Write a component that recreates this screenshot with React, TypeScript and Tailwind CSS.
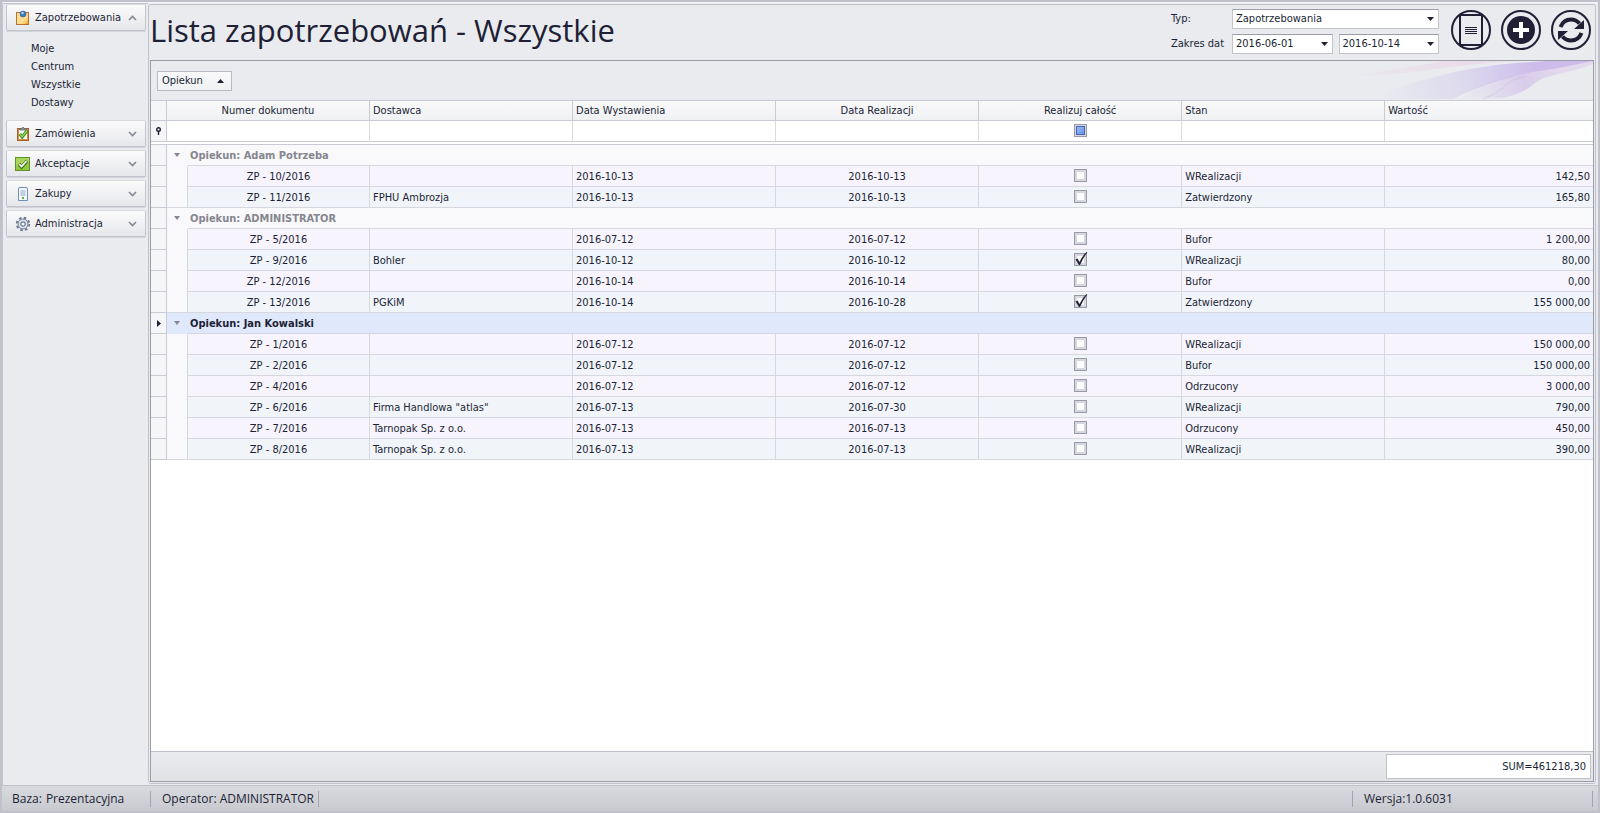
import type { ReactNode } from "react";

type Row = {
  no: string;
  supplier?: string;
  issued: string;
  due: string;
  whole?: boolean;
  state: string;
  value: string;
};

type Group = { owner: string; active?: boolean; rows: Row[] };

const groups: Group[] = [
  {
    owner: "Adam Potrzeba",
    rows: [
      { no: "ZP - 10/2016", issued: "2016-10-13", due: "2016-10-13", state: "WRealizacji", value: "142,50" },
      { no: "ZP - 11/2016", supplier: "FPHU Ambrozja", issued: "2016-10-13", due: "2016-10-13", state: "Zatwierdzony", value: "165,80" },
    ],
  },
  {
    owner: "ADMINISTRATOR",
    rows: [
      { no: "ZP - 5/2016", issued: "2016-07-12", due: "2016-07-12", state: "Bufor", value: "1 200,00" },
      { no: "ZP - 9/2016", supplier: "Bohler", issued: "2016-10-12", due: "2016-10-12", whole: true, state: "WRealizacji", value: "80,00" },
      { no: "ZP - 12/2016", issued: "2016-10-14", due: "2016-10-14", state: "Bufor", value: "0,00" },
      { no: "ZP - 13/2016", supplier: "PGKiM", issued: "2016-10-14", due: "2016-10-28", whole: true, state: "Zatwierdzony", value: "155 000,00" },
    ],
  },
  {
    owner: "Jan Kowalski",
    active: true,
    rows: [
      { no: "ZP - 1/2016", issued: "2016-07-12", due: "2016-07-12", state: "WRealizacji", value: "150 000,00" },
      { no: "ZP - 2/2016", issued: "2016-07-12", due: "2016-07-12", state: "Bufor", value: "150 000,00" },
      { no: "ZP - 4/2016", issued: "2016-07-12", due: "2016-07-12", state: "Odrzucony", value: "3 000,00" },
      { no: "ZP - 6/2016", supplier: 'Firma Handlowa "atlas"', issued: "2016-07-13", due: "2016-07-30", state: "WRealizacji", value: "790,00" },
      { no: "ZP - 7/2016", supplier: "Tarnopak Sp. z o.o.", issued: "2016-07-13", due: "2016-07-13", state: "Odrzucony", value: "450,00" },
      { no: "ZP - 8/2016", supplier: "Tarnopak Sp. z o.o.", issued: "2016-07-13", due: "2016-07-13", state: "WRealizacji", value: "390,00" },
    ],
  },
];

function NoteIcon() {
  return (
    <svg width="16" height="16" viewBox="0 0 16 16">
      <rect x="1.5" y="2.5" width="12" height="12" fill="#fbd069" stroke="#b5713a" />
      <path d="M2 3h11v5L6 14H2z" fill="#fde3a0" opacity=".7" />
      <path d="M9.5 14l3.500-3.500V14z" fill="#f3ab44" />
      <circle cx="8" cy="4" r="3" fill="#3f78bd" stroke="#2c5a96" strokeWidth=".6" />
      <circle cx="7.500" cy="3" r="1.300" fill="#a9cdf2" />
    </svg>
  );
}

function ClipboardIcon() {
  return (
    <svg width="16" height="16" viewBox="0 0 16 16">
      <rect x="2.500" y="2.500" width="11" height="12" fill="#d98b45" stroke="#a85f25" />
      <rect x="4" y="4" width="8" height="9" fill="#f4f6f8" />
      <path d="M5 4V2.500h1.500Q8 0 9.500 2.500H11V4z" fill="#8b959c" stroke="#5b656c" strokeWidth=".7" />
      <path d="M4.800 8l2.400 3 5-6.500" fill="none" stroke="#3c8d1f" strokeWidth="3" />
      <path d="M5 8.200l2.200 2.500 4.800-6" fill="none" stroke="#8fd84e" strokeWidth="1.400" />
    </svg>
  );
}

function AcceptIcon() {
  return (
    <svg width="16" height="16" viewBox="0 0 16 16">
      <rect x=".5" y="1.500" width="14" height="13" fill="#92c83e" stroke="#5d9425" />
      <path d="M1 2h13v5L1 10z" fill="#b4dc68" opacity=".7" />
      <path d="M4 8l2.500 3 5.500-6" fill="none" stroke="#3f6d1c" strokeWidth="3.400" />
      <path d="M4.300 8.200l2.200 2.400 5-5.400" fill="none" stroke="#fff" strokeWidth="1.700" />
    </svg>
  );
}

function ReceiptIcon() {
  return (
    <svg width="16" height="16" viewBox="0 0 16 16">
      <path d="M3.500 3q0-1.500 1.500-1.500h6q1.500 0 1.500 1.500v11.500h-9z" fill="#f3f7fc" stroke="#6f8fb8" />
      <path d="M5.500 5h5M5.500 7h5M5.500 9h5" stroke="#8da9cc" />
      <rect x="7" y="11" width="2" height="2" fill="#5fb336" />
    </svg>
  );
}

function GearIcon() {
  return (
    <svg width="16" height="16" viewBox="0 0 16 16">
      <circle cx="8" cy="8" r="6.300" fill="none" stroke="#6c7a91" strokeWidth="1.800" strokeDasharray="2.600 2.350" />
      <circle cx="8" cy="8" r="5" fill="#dfe5ee" stroke="#6c7a91" />
      <circle cx="8" cy="8" r="2.200" fill="#fff" stroke="#6c7a91" strokeWidth="1.200" />
    </svg>
  );
}

function Chevron({ up }: { up?: boolean }) {
  return (
    <svg width="9" height="6" viewBox="0 0 9 6" className="ml-auto">
      <path d={up ? "M1 5l3.500-3.500L8 5" : "M1 1l3.500 3.500L8 1"} fill="none" stroke="#878895" strokeWidth="1.600" />
    </svg>
  );
}

function NavButton({ icon, label, open }: { icon: ReactNode; label: string; open?: boolean }) {
  return (
    <button className="flex h-[27px] w-full items-center gap-1 rounded-xs border border-[#c3c4cd] border-t-[#d8d9df] bg-linear-to-b from-[#fbfbfc] to-[#e6e7eb] pr-2 pl-2 shadow-[0_1px_0_#d2d3da]">
      {icon}
      <span>{label}</span>
      <Chevron up={open} />
    </button>
  );
}

function Combo({ id, label, value }: { id: string; label: string; value: string }) {
  return (
    <div className="relative flex-1">
      <select
        id={id}
        aria-label={label}
        className="block h-5 w-full appearance-none border border-[#c3c4cc] border-t-[#9b9ca8] bg-white pl-[3px] outline-none"
      >
        <option>{value}</option>
      </select>
      <svg width="7" height="4" viewBox="0 0 7 4" className="pointer-events-none absolute top-2 right-[5px]">
        <path d="M0 0h7L3.500 4z" fill="#201f35" />
      </svg>
    </div>
  );
}

function Check({ checked, label }: { checked?: boolean; label: string }) {
  return (
    <span className="relative block size-[13px]">
      <input
        type="checkbox"
        aria-label={label}
        defaultChecked={checked}
        className="block size-[13px] appearance-none border border-[#999aa7] bg-white shadow-[inset_0_0_0_2px_#d5d6de]"
      />
      {checked && (
        <svg width="14" height="15" viewBox="0 0 14 15" className="pointer-events-none absolute -top-px left-0">
          <path d="M1.500 7.500l2-1 2 3.500Q8.500 3.500 12.500 0l.8.4Q9 6 6 13H5z" fill="#24233a" />
        </svg>
      )}
    </span>
  );
}

function Swoosh() {
  return (
    <svg viewBox="0 0 250 39" width="250" height="39" className="absolute top-0 right-0">
      <defs>
        <linearGradient id="violet" x1="20" y1="38" x2="190" y2="0" gradientUnits="userSpaceOnUse">
          <stop offset=".1" stopColor="#c9bdec" stopOpacity="0" />
          <stop offset=".55" stopColor="#c9bdec" stopOpacity=".35" />
          <stop offset="1" stopColor="#c4b0ea" stopOpacity=".8" />
        </linearGradient>
        <linearGradient id="plum" x1="120" y1="38" x2="220" y2="4" gradientUnits="userSpaceOnUse">
          <stop offset="0" stopColor="#d3bfe9" stopOpacity="0" />
          <stop offset=".6" stopColor="#cdb8e8" stopOpacity=".6" />
          <stop offset="1" stopColor="#dcc9ea" stopOpacity=".5" />
        </linearGradient>
        <linearGradient id="pink" x1="0" x2="1">
          <stop offset="0" stopColor="#ecd0e4" stopOpacity="0" />
          <stop offset=".7" stopColor="#ecd0e4" stopOpacity=".6" />
          <stop offset="1" stopColor="#ecd0e4" stopOpacity=".1" />
        </linearGradient>
      </defs>
      <path d="M0 15Q60 8 100 0h80Q120 3 80 10Q40 15 0 15z" fill="url(#pink)" />
      <path d="M20 38Q90 14 127 8Q160 2 205 0h45Q215 8 190 11Q140 22 110 38z" fill="url(#violet)" />
      <path d="M110 38Q140 20 180 13Q215 6 250 0v3Q232 10 215 13Q200 16 192 22Q180 33 160 37z" fill="url(#plum)" />
      <path d="M140 38Q155 32 163 24Q168 18 184 15" fill="none" stroke="#b9a6e2" strokeOpacity=".3" />
    </svg>
  );
}

function StatusItem({ children, className = "" }: { children?: ReactNode; className?: string }) {
  return <div className={"flex h-4 items-center border-r border-[#a3a4ae] " + className}>{children}</div>;
}

const headCell = "border-r border-b border-[#c9cad3] bg-linear-to-b from-[#f9f9fa] to-[#f0f1f3] px-[3px] font-normal last:border-r-0";
const filterCell = "border-r border-b border-[#c9cad3] border-r-[#dadbe1] bg-white last:border-r-0";
const cell = "truncate border-r border-b border-[#d6d7df] px-[3px] pt-[2px] last:border-r-0";
const gutter = "border-r border-b border-[#c9cad3] bg-[#f5f6f8]";

export default function App() {
  return (
    <div className="flex min-h-screen flex-col border-2 border-[#c0c1cb] bg-[#e9ebef] font-['DejaVu_Sans_Condensed','DejaVu_Sans',sans-serif] text-[11px] leading-[14px] text-[#201f35]">
      <div className="flex flex-1 border-t border-[#f3f4f6]">
        <nav className="flex w-[146px] shrink-0 flex-col gap-[3px] border-t border-l border-[#c3c4cd] pr-[2px] pl-[3px]">
          <NavButton icon={<NoteIcon />} label="Zapotrzebowania" open />
          <ul className="mb-[5px] pt-[6px] pl-[25px] leading-[18px]">
            {["Moje", "Centrum", "Wszystkie", "Dostawy"].map((item) => (
              <li key={item}>
                <a href="#">{item}</a>
              </li>
            ))}
          </ul>
          <NavButton icon={<ClipboardIcon />} label="Zamówienia" />
          <NavButton icon={<AcceptIcon />} label="Akceptacje" />
          <NavButton icon={<ReceiptIcon />} label="Zakupy" />
          <NavButton icon={<GearIcon />} label="Administracja" />
        </nav>

        <main className="mt-px mr-[2px] mb-px flex min-w-0 flex-1 flex-col rounded-[3px] border border-[#c0c1cb] px-px pb-px">
          <header className="flex h-[55px] items-center gap-3 pb-[5px]">
            <h1 className="flex-1 font-['Open_Sans',sans-serif] text-[31px] leading-[42px]">
              Lista zapotrzebowań - Wszystkie
            </h1>
            <div className="flex w-[268px] flex-col gap-[5px] pt-[3px]">
              <div className="flex items-center">
                <label htmlFor="typ" className="w-[61px]">Typ:</label>
                <Combo id="typ" label="Typ" value="Zapotrzebowania" />
              </div>
              <div className="flex items-center">
                <label htmlFor="od" className="w-[61px]">Zakres dat</label>
                <div className="flex flex-1 gap-[6px]">
                  <Combo id="od" label="Data od" value="2016-06-01" />
                  <Combo id="do" label="Data do" value="2016-10-14" />
                </div>
              </div>
            </div>
            <div className="flex gap-[10px] pr-[3px]">
              <button aria-label="Dokument">
                <svg width="40" height="40" viewBox="0 0 40 40" fill="none" stroke="#201f35">
                  <circle cx="20" cy="20" r="19" strokeWidth="2" />
                  <path d="M9 5h22v30H9z" strokeWidth="2" />
                  <path d="M14 17.500h12M14 19.500h12M14 21.500h12M14 23.500h12" />
                </svg>
              </button>
              <button aria-label="Dodaj">
                <svg width="40" height="40" viewBox="0 0 40 40">
                  <circle cx="20" cy="20" r="19" fill="none" stroke="#201f35" strokeWidth="2" />
                  <circle cx="20" cy="20" r="14" fill="#201f35" />
                  <path d="M20 12v16M12 20h16" stroke="#fff" strokeWidth="4" />
                </svg>
              </button>
              <button aria-label="Odśwież">
                <svg width="40" height="40" viewBox="0 0 40 40">
                  <circle cx="20" cy="20" r="19" fill="none" stroke="#201f35" strokeWidth="2" />
                  <path d="M9.500 17q3-7.500 10.500-7.500 5 0 8.500 4" fill="none" stroke="#201f35" strokeWidth="4" />
                  <path d="M33 10v9H23z" fill="#201f35" />
                  <path d="M30.500 23q-3 7.500-10.500 7.500-5 0-8.500-4" fill="none" stroke="#201f35" strokeWidth="4" />
                  <path d="M7 30v-9h10z" fill="#201f35" />
                </svg>
              </button>
            </div>
          </header>

          <section className="flex flex-1 flex-col border border-[#9b9ca8] bg-white">
            <div className="relative flex h-10 items-center border-b border-[#c9cad3] bg-[#e9ebef] px-[6px]">
              <Swoosh />
              <button className="flex h-5 w-[75px] items-center justify-between border border-[#b9bac4] bg-linear-to-b from-[#f9f9fa] to-[#f0f1f3] pr-[7px] pl-1">
                Opiekun
                <svg width="7" height="4" viewBox="0 0 7 4">
                  <path d="M0 4h7L3.500 0z" fill="#201f35" />
                </svg>
              </button>
            </div>

            <table className="w-full table-fixed border-separate border-spacing-0">
              <colgroup>
                <col className="w-4" />
                <col className="w-[21px]" />
                <col className="w-[182px]" />
                <col className="w-[14.08%]" />
                <col className="w-[14.08%]" />
                <col className="w-[14.08%]" />
                <col className="w-[14.08%]" />
                <col className="w-[14.08%]" />
                <col />
              </colgroup>
              <thead>
                <tr className="h-5">
                  <td className={gutter} />
                  <th colSpan={2} className={headCell}>Numer dokumentu</th>
                  <th className={headCell + " text-left"}>Dostawca</th>
                  <th className={headCell + " text-left"}>Data Wystawienia</th>
                  <th className={headCell}>Data Realizacji</th>
                  <th className={headCell}>Realizuj całość</th>
                  <th className={headCell + " text-left"}>Stan</th>
                  <th className={headCell + " text-left"}>Wartość</th>
                </tr>
                <tr className="h-[21px]">
                  <td className={gutter}>
                    <svg width="7" height="8" viewBox="0 0 7 8" className="mx-auto">
                      <circle cx="3.500" cy="2.500" r="1.800" fill="none" stroke="#201f35" strokeWidth="1.400" />
                      <path d="M3.500 4v4" stroke="#201f35" strokeWidth="1.400" />
                    </svg>
                  </td>
                  <td colSpan={2} className={filterCell} />
                  <td className={filterCell} />
                  <td className={filterCell} />
                  <td className={filterCell} />
                  <td className={filterCell + " pb-[2px]"}>
                    <input
                      type="checkbox"
                      aria-label="Filtr: realizuj całość"
                      className="mx-auto block size-[13px] appearance-none border border-[#999aa7] bg-linear-to-br from-[#a9c4f5] to-[#5b87df] shadow-[inset_0_0_0_1px_#d5d6de,inset_0_0_0_2px_#4467b8]"
                    />
                  </td>
                  <td className={filterCell} />
                  <td className={filterCell} />
                </tr>
                <tr className="h-[3px]">
                  <td colSpan={9} className="border-b border-[#c9cad3] p-0" />
                </tr>
              </thead>
              {groups.map((group) => (
                <tbody key={group.owner}>
                  <tr className={group.active ? "h-[21px] bg-[#e0e8fb]" : "h-[21px] bg-[#f9f9fb] text-[#85868f]"}>
                    <td className={gutter}>
                      {group.active && (
                        <svg width="4" height="7" viewBox="0 0 4 7" className="mx-auto">
                          <path d="M0 0v7l4-3.500z" fill="#201f35" />
                        </svg>
                      )}
                    </td>
                    <td className="pr-px pb-px">
                      <svg width="6" height="4" viewBox="0 0 6 4" className="mx-auto">
                        <path d="M0 0h6L3 4z" fill="#85868f" />
                      </svg>
                    </td>
                    <td colSpan={7} className="border-b border-[#d6d7df] pt-[2px] pl-[2px] font-bold">
                      Opiekun: {group.owner}
                    </td>
                  </tr>
                  {group.rows.map((row, i) => (
                    <tr key={row.no} className={i % 2 ? "h-[21px] bg-[#f1f5fa]" : "h-[21px] bg-[#f7f4fd]"}>
                      <td className={gutter} />
                      <td
                        className={
                          i === group.rows.length - 1
                            ? "border-r border-b border-[#d6d7df] bg-[#f9f9fb]"
                            : "border-r border-[#d6d7df] bg-[#f9f9fb]"
                        }
                      />
                      <td className={cell + " text-center"}>{row.no}</td>
                      <td className={cell}>{row.supplier}</td>
                      <td className={cell}>{row.issued}</td>
                      <td className={cell + " text-center"}>{row.due}</td>
                      <td className="border-r border-b border-[#d6d7df] pb-[2px]">
                        <div className="flex justify-center">
                          <Check checked={row.whole} label={"Realizuj całość " + row.no} />
                        </div>
                      </td>
                      <td className={cell}>{row.state}</td>
                      <td className={cell + " text-right"}>{row.value}</td>
                    </tr>
                  ))}
                </tbody>
              ))}
            </table>

            <div className="mt-auto flex h-[30px] items-center justify-end border-t border-[#c0c1cb] bg-linear-to-b from-[#e9ebef] to-[#e1e2e6] pr-[2px]">
              <output className="flex h-[25px] w-[205px] items-center justify-end border border-[#c0c1cb] bg-white pr-1">
                SUM=461218,30
              </output>
            </div>
          </section>
        </main>
      </div>

      <footer className="flex h-[26px] items-center border-t border-[#c0c1cb] bg-linear-to-b from-[#d9dade] to-[#c9cad0] pr-[5px] font-['Open_Sans',sans-serif] text-[12px]">
        <StatusItem className="w-[149px] gap-1 pl-[10px]">
          <span>Baza:</span>
          <span>Prezentacyjna</span>
        </StatusItem>
        <StatusItem className="w-[168px] pl-[11px]">Operator: ADMINISTRATOR</StatusItem>
        <StatusItem className="flex-1" />
        <StatusItem className="w-[240px] pl-[11px]">Wersja:1.0.6031</StatusItem>
      </footer>
    </div>
  );
}
